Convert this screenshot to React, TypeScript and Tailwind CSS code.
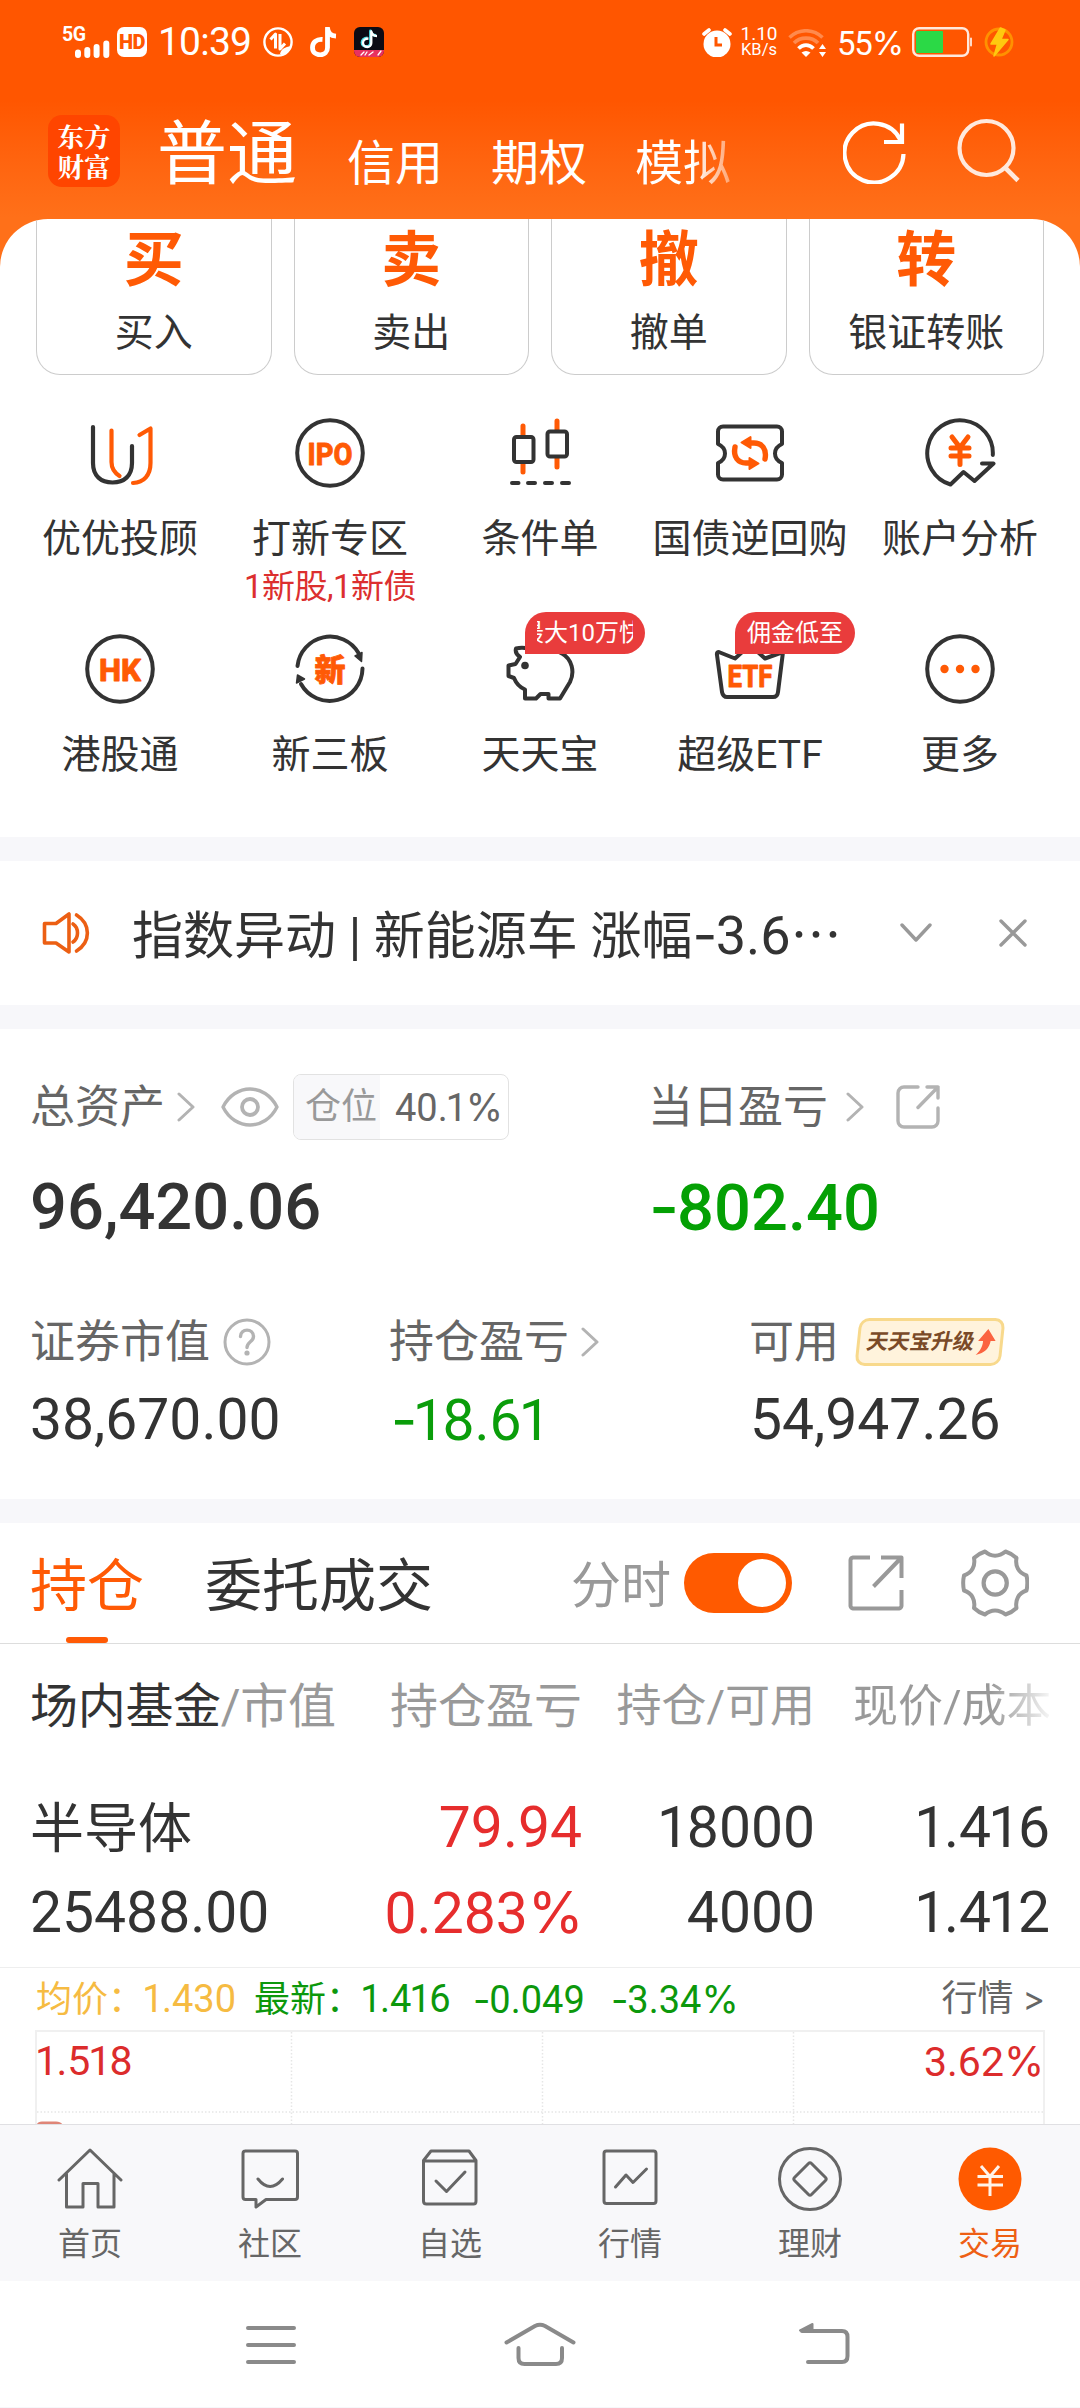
import type { ReactNode } from 'react';

const ORANGE = '#ff5a05';

const Svg = ({ w, h, children, className = '' }: { w: number; h: number; children: ReactNode; className?: string }) => (
  <svg width={w} height={h} viewBox={`0 0 ${w} ${h}`} fill="none" strokeLinecap="round" strokeLinejoin="round" className={`shrink-0 ${className}`}>
    {children}
  </svg>
);

// Roboto digits with a narrower 1 and Inter's wider hyphen and percent sign
const Num = ({ value }: { value: string }) => (
  <>
    {value.split(/([-1%])/).map((part, i) => {
      if (part === '1') return <span key={i} className="-mr-[0.04em] -ml-[0.05em]">1</span>;
      if (part === '-' || part === '%') return <span key={i} className="font-['Inter'] tracking-[-0.03em]">{part}</span>;
      return part;
    })}
  </>
);

const Chevron = ({ className = '' }: { className?: string }) => (
  <Svg w={18} h={30} className={className}><path d="M2 2L16 15L2 28" stroke="#b3b3b3" strokeWidth="3" /></Svg>
);

function StatusBar() {
  return (
    <div className="flex h-[84px] items-center pl-[62px] pr-[66px] text-white">
      <Svg w={48} h={32}>
        <text x="0" y="15" fontFamily="Roboto" fontWeight="700" fontSize="19.5" fill="#fff" textLength="24">5G</text>
        <path d="M16 26.5V29M25.3 24V29M34.6 21V29M44.3 17.5V29" stroke="#fff" strokeWidth="6" />
      </Svg>
      <div className="ml-[7px] flex h-[30px] w-[30px] items-center justify-center rounded-[7px] bg-white text-[20px] leading-none font-black tracking-[-0.5px] text-[#ff5600]">HD</div>
      <span className="ml-[11px] w-[93px] text-[39px] leading-none tracking-[-0.8px]">10:39</span>
      <Svg w={30} h={30} className="ml-[12px]">
        <circle cx="15" cy="15" r="13.6" stroke="#fff" strokeWidth="2.4" />
        <path d="M7.5 12.5L12.5 7V21.5M17 7V22L22 16.5" stroke="#fff" strokeWidth="3" strokeLinecap="butt" />
        <path d="M17 27C18 22 22 20 28 19C27 24 23 28 17 27Z" fill="#fff" />
      </Svg>
      <Svg w={27} h={30} className="ml-[17px]">
        <path d="M12.5 12.5C6.5 12 2.5 15.5 2.5 20.5S6 27.8 10.2 27.8S17.5 25 17.5 20.5V1C18 6 21 9 26 9.2" stroke="#fff" strokeWidth="4.8" strokeLinecap="butt" />
      </Svg>
      <Svg w={30} h={30} className="ml-[17px]">
        <rect width="30" height="30" rx="6" fill="#0c0b14" />
        <path d="M0 23H30V24A6 6 0 0 1 24 30H6A6 6 0 0 1 0 24Z" fill="#e8315f" />
        <path d="M13.5 11C10 11 8 13 8 15.5S10 19.5 12.5 19.5S16.5 18 16.5 15.5V4C17 7 19 8.5 22 8.5" stroke="#4be0e6" strokeWidth="2.8" strokeLinecap="butt" />
        <path d="M14.5 11.5C11 11.5 9 13.5 9 15.8S11 20 13.2 20S17.3 18.5 17.3 16V4.5C18 7.5 20 9 23 9" stroke="#fff" strokeWidth="2.3" strokeLinecap="butt" />
        <path d="M7 28L10 25M11 28L13 25M15 28L19 25M24 28L27 24" stroke="#fff" strokeWidth="1.3" />
      </Svg>

      <Svg w={30} h={30} className="ml-auto">
        <circle cx="15" cy="17" r="13.5" fill="#fff" />
        <path d="M2 7L7 3M28 7L23 3" stroke="#fff" strokeWidth="3.6" />
        <path d="M14 10V18H20" stroke="#ff5600" strokeWidth="3" strokeLinecap="butt" strokeLinejoin="miter" />
      </Svg>
      <div className="ml-[7px] flex w-[40px] flex-col items-center text-center leading-[16px]">
        <span className="text-[19px]">1.10</span>
        <span className="text-[16.5px]">KB/s</span>
      </div>
      <Svg w={38} h={28} className="mt-[2px] ml-[9px]">
        <path d="M1.5 8.5C11 -0.5 25 -0.5 34.5 8.5" stroke="#ff8a4d" strokeWidth="3.6" strokeLinecap="butt" />
        <path d="M6 14C12.5 7.5 23.5 7.5 30 14" stroke="#ff8a4d" strokeWidth="3.6" strokeLinecap="butt" />
        <path d="M10.5 19.5C15 15 21 15 25.5 19.5" stroke="#fff" strokeWidth="3.8" strokeLinecap="butt" />
        <path d="M13.5 23.5Q18 20.5 22.5 23.5L18 28Z" fill="#fff" />
        <path d="M34.5 15L38 20H31ZM34.5 28L38 23H31Z" fill="#fff" />
      </Svg>
      <span className="mt-[2px] ml-[11px] w-[64px] text-[33px] leading-none tracking-[-1.2px]"><Num value="55%" /></span>
      <Svg w={62} h={30} className="ml-[11px]">
        <rect x="1.2" y="1.2" width="55" height="27.6" rx="6" stroke="#ffe9dd" strokeWidth="2.4" />
        <rect x="4" y="4" width="27" height="22" rx="1" fill="#2bd946" />
        <path d="M59 11.5V18.5" stroke="#ffe9dd" strokeWidth="1.8" />
      </Svg>
      <Svg w={30} h={30} className="ml-[10px]">
        <circle cx="15" cy="15" r="13" stroke="#ff9100" strokeWidth="2.8" />
        <path d="M16.5 1L7 17H13.5L10 29L24 12.5H17L21 3Z" fill="#ffc90f" stroke="#ffc90f" strokeWidth="1.5" />
      </Svg>
    </div>
  );
}

function Header() {
  return (
    <div className="flex h-[135px] items-start pr-[59px] pl-12 text-white">
      <div className="mt-[31px] flex h-[72px] w-[72px] flex-col items-center justify-center rounded-[14px] bg-[#ff4500] font-['Noto_Serif_CJK_SC','Noto_Sans_CJK_SC',sans-serif] text-[26.5px] leading-[30px] font-bold">
        <span>东方</span>
        <span>财富</span>
      </div>
      <div className="mt-[28px] ml-[37px] flex items-baseline leading-[86px] whitespace-nowrap">
        <span className="text-[70px]">普通</span>
        <span className="relative top-px ml-[50px] text-[48px]">信用</span>
        <span className="relative top-px ml-[48px] text-[48px]">期权</span>
        <span className="relative top-px ml-[48px] bg-linear-to-r from-white from-60% to-white/40 bg-clip-text text-[48px] text-transparent">模拟</span>
      </div>
      <Svg w={64} h={64} className="mt-[36px] ml-auto">
        <path d="M60.5 34A29.5 29.5 0 1 1 57.5 20" stroke="#fff" strokeWidth="4.2" strokeLinecap="butt" />
        <path d="M59 3.5V22H41" stroke="#fff" strokeWidth="4.2" strokeLinecap="butt" strokeLinejoin="miter" />
      </Svg>
      <Svg w={64} h={66} className="mt-[34px] ml-[50px]">
        <circle cx="29.5" cy="30" r="27" stroke="#ffe9dd" strokeWidth="4.2" />
        <path d="M48.5 50L61 62.5" stroke="#ffe9dd" strokeWidth="4.6" strokeLinecap="butt" />
      </Svg>
    </div>
  );
}

const trades = [
  { mark: '买', label: '买入' },
  { mark: '卖', label: '卖出' },
  { mark: '撤', label: '撤单' },
  { mark: '转', label: '银证转账' },
];

const Ring = () => <circle cx="36" cy="36" r="32.8" stroke="#333" strokeWidth="4" />;

const IconText = ({ y = 47.5, w, size = 32, children }: { y?: number; w: number; size?: number; children: string }) => (
  <text x={36 - w / 2} y={y} textLength={w} lengthAdjust="spacingAndGlyphs" fontFamily="Roboto, 'Noto Sans CJK SC'" fontWeight="800" fontSize={size} fill={ORANGE} stroke={ORANGE} strokeWidth="0.8">{children}</text>
);

const features: { label: string; sub?: string; badge?: string; scrolled?: boolean; icon: ReactNode }[] = [
  {
    label: '优优投顾',
    icon: <>
      <path d="M27.5 13.5V45C27.5 52 31 56 35.5 59" stroke={ORANGE} strokeWidth="4.2" />
      <path d="M55.5 18L66.5 11.5V46C66.5 58 60 65.5 49 66" stroke={ORANGE} strokeWidth="4.2" />
      <path d="M9 10V46C9 59 17 65.5 28.5 65.5S48 59 48 46V29" stroke="#333" strokeWidth="4.2" />
    </>,
  },
  { label: '打新专区', sub: '1新股,1新债', icon: <><Ring /><IconText w={45}>IPO</IconText></> },
  {
    label: '条件单',
    icon: <>
      <path d="M19 9V18M19 46V55M53 4V13M53 41V50" stroke={ORANGE} strokeWidth="5" />
      <rect x="10" y="20" width="19.5" height="25" rx="2.5" stroke="#333" strokeWidth="4" />
      <rect x="43.5" y="14.5" width="19.5" height="25" rx="2.5" stroke="#333" strokeWidth="4" />
      <path d="M8 66H14.5M24 66H31M41 66H48M58 66H65" stroke="#333" strokeWidth="4" />
    </>,
  },
  {
    label: '国债逆回购',
    icon: <>
      <path d="M9 9.5H63A5 5 0 0 1 68 14.5V27Q61 30 61 36.5T68 46V57.5A5 5 0 0 1 63 62.5H9A5 5 0 0 1 4 57.5V46Q11 43 11 36.500T4 27V14.5A5 5 0 0 1 9 9.5Z" stroke="#333" strokeWidth="4" />
      {[0, 180].map(a => (
        <g key={a} transform={`rotate(${a} 36 36)`}>
          <path d="M35 26H40C48 26 53 32 51 42" stroke={ORANGE} strokeWidth="5.4" />
          <path d="M27.5 25.5L36.5 20V31Z" fill={ORANGE} stroke={ORANGE} strokeWidth="2" />
        </g>
      ))}
    </>,
  },
  {
    label: '账户分析',
    icon: <>
      <path d="M68.8 38A32.8 32.8 0 1 0 26.5 67.5L39.5 55L50.5 64L69.5 46.5H58" stroke="#333" strokeWidth="4" />
      <path d="M28 20L36 30.5L44 20M27 31H45M27 39H45M36 31V47.5" stroke={ORANGE} strokeWidth="5" />
    </>,
  },
  { label: '港股通', icon: <><Ring /><IconText w={42}>HK</IconText></> },
  {
    label: '新三板',
    icon: <>
      <path d="M3.5 33A32.8 32.8 0 0 1 64.5 20M68.5 35.500A32.8 32.8 0 0 1 7 51" stroke="#333" strokeWidth="4" />
      <path d="M61 23L68 19.5L67.5 28.5ZM2.5 50L3.5 42L10.5 46Z" fill="#333" stroke="#333" strokeWidth="1.5" />
      <IconText w={31} size={31}>新</IconText>
    </>,
  },
  {
    label: '天天宝',
    badge: '最大10万快',
    scrolled: true,
    icon: <>
      <path d="M24 15.5C20 14.5 16 14.5 12 15.5C11 19 13 22 16 24L11.5 31L4.5 32.5V43L10 45C12 50 15 54 21 56.5V65.5H32L36.500 61H44.5V65.5H56L66 49C71 39 68 26 58 20.5C48 14 34 14 24 15.5Z" stroke="#333" strokeWidth="4" />
      <circle cx="21" cy="32.5" r="3.8" fill="#333" />
    </>,
  },
  {
    label: '超级ETF',
    badge: '佣金低至',
    icon: <>
      <path d="M3 22C2.5 19.5 4 18.500 6 19.5L21 25.5L36 12L51 25.5L69 19L64 59Q63.5 64 59 64H13Q9 64 8 59Z" stroke="#333" strokeWidth="4" />
      <IconText w={45} y={53.5}>ETF</IconText>
    </>,
  },
  {
    label: '更多',
    icon: <>
      <Ring />
      <circle cx="20.5" cy="36" r="4.2" fill={ORANGE} />
      <circle cx="36" cy="36" r="4.2" fill={ORANGE} />
      <circle cx="51.5" cy="36" r="4.2" fill={ORANGE} />
    </>,
  },
];

function Shortcuts() {
  return (
    <section className="h-[618px] overflow-hidden rounded-t-[48px] bg-white">
      <div className="grid h-[156px] grid-cols-4 gap-[22px] px-9">
        {trades.map(t => (
          <div key={t.label} className="flex flex-col items-center rounded-b-[24px] border border-t-0 border-[#ccc]">
            <span className="mt-[12px] text-[60px] leading-[60px] font-bold text-[#ff5a05]">{t.mark}</span>
            <span className="mt-[22px] text-[39px] leading-[40px] text-[#333]">{t.label}</span>
          </div>
        ))}
      </div>
      <div className="grid grid-cols-5 px-[15px] pt-[42px]">
        {features.map(f => (
          <div key={f.label} className="relative flex h-[216px] flex-col items-center whitespace-nowrap">
            <Svg w={72} h={72}>{f.icon}</Svg>
            <span className="mt-[30px] text-[39px] leading-[40px] text-[#333]">{f.label}</span>
            {f.sub && <span className="mt-[8px] text-[33px] leading-[40px] tracking-[-0.5px] text-[#dc2f2f]">{f.sub}</span>}
            {f.badge && (
              <div className="absolute top-[-21px] left-[90px] h-[42px] w-[120px] rounded-[21px] rounded-bl-none bg-[#e93c3c] px-3 text-[24px] leading-[43px] text-white">
                <div className="overflow-hidden">
                  <div className={f.scrolled ? '-ml-[17px]' : ''}>{f.badge}</div>
                </div>
              </div>
            )}
          </div>
        ))}
      </div>
    </section>
  );
}

function Notice() {
  return (
    <section className="flex h-[144px] items-center bg-white pr-[53px] pl-[42px] text-[51px] text-[#333]">
      <Svg w={48} h={44}>
        <path d="M2.5 12.5H14L27 3V41L14 32H2.5Z" stroke="#ec5f13" strokeWidth="3.6" />
        <path d="M31 13C37 17 37 27 31 31M34.5 4C49 13 49 31 34.5 40" stroke="#ec5f13" strokeWidth="3.6" />
      </Svg>
      <div className="ml-[42px] flex-1 pt-[3px] leading-[60px] whitespace-pre">
        指数异动 | 新能源车 涨幅<span className="text-[54px]"><Num value="-3.6" /></span><span className="font-['Noto_Sans_CJK_SC']">…</span>
      </div>
      <Svg w={32} h={20} className="mr-[67px]"><path d="M2 2L16 17L30 2" stroke="#999" strokeWidth="3.4" /></Svg>
      <Svg w={28} h={28}><path d="M2 2L26 26M26 2L2 26" stroke="#999" strokeWidth="3.4" /></Svg>
    </section>
  );
}

function Assets() {
  return (
    <section className="h-[470px] bg-white px-[30px] pt-[45px] text-[45px] text-[#666]">
      <div className="flex h-[66px] items-center leading-[60px]">
        <div className="flex w-[618px] items-center">
          <span className="pt-[2px]">总资产</span>
          <Chevron className="ml-[12px]" />
          <Svg w={58} h={40} className="ml-[26px]">
            <path d="M2 20C14 -4 44 -4 56 20C44 44 14 44 2 20Z" stroke="#b3b3b3" strokeWidth="3.4" />
            <circle cx="29" cy="20" r="8" stroke="#b3b3b3" strokeWidth="3.8" />
          </Svg>
          <div className="ml-[14px] flex h-[66px] w-[216px] items-center overflow-hidden rounded-[8px] border border-[#e2e2e2] leading-[66px]">
            <span className="w-[86px] bg-[#f8f8fa] pl-[11px] text-[36px] text-[#999]">仓位</span>
            <span className="pl-[15px] text-[38px] whitespace-nowrap"><Num value="40.1%" /></span>
          </div>
        </div>
        <span className="pt-[2px]">当日盈亏</span>
        <Chevron className="ml-[18px]" />
        <Svg w={44} h={44} className="ml-[32px]">
          <path d="M22 2H8A6 6 0 0 0 2 8V36A6 6 0 0 0 8 42H36A6 6 0 0 0 42 36V23M31 2H42V13M42 2L22 22.5" stroke="#b3b3b3" strokeWidth="3.4" />
        </Svg>
      </div>
      <div className="mt-[32px] flex h-[70px] text-[65px] leading-[70px] font-medium">
        <span className="w-[619px] text-[#333]"><Num value="96,420.06" /></span>
        <span className="text-[#04a004]"><Num value="-802.40" /></span>
      </div>
      <div className="mt-[70px] flex h-[60px] items-center leading-[60px]">
        <div className="flex w-[359px] items-center">
          <span className="pt-[2px]">证券市值</span>
          <Svg w={48} h={48} className="ml-[13px]">
            <circle cx="24" cy="24" r="22" stroke="#b3b3b3" strokeWidth="3" />
            <path d="M17.5 18.5C17.5 10 30.500 10 30.5 18.5C30.5 24 24 23.5 24 29.5" stroke="#b3b3b3" strokeWidth="3.4" />
            <circle cx="24" cy="35" r="2.6" fill="#b3b3b3" />
          </Svg>
        </div>
        <div className="flex w-[360px] items-center">
          <span className="pt-[2px]">持仓盈亏</span>
          <Chevron className="ml-[12px]" />
        </div>
        <span className="pt-[2px]">可用</span>
        <div className="ml-[18px] flex h-[48px] w-[146px] -skew-x-6 items-center rounded-[10px] border-[3px] border-[#f8d98c] bg-[#fff3dc] pl-[7px] text-[21.5px] font-bold text-[#7a4a28]">
          <span className="-skew-x-6">天天宝升级</span>
          <Svg w={20} h={26} className="ml-px">
            <path d="M11 0L19.5 12H14.5C14 19 10 24 1 26C5 22 7 18 7 12H2Z" fill="#fb6340" />
          </Svg>
        </div>
      </div>
      <div className="mt-[13px] flex h-[70px] text-[57px] leading-[70px] text-[#333]">
        <span className="w-[361px]"><Num value="38,670.00" /></span>
        <span className="w-[359px] text-[#0a9d0a]"><Num value="-18.61" /></span>
        <span><Num value="54,947.26" /></span>
      </div>
    </section>
  );
}

function Tabs() {
  return (
    <div className="flex h-[121px] items-center border-b border-[#ddd] pr-[51px] pl-[30px] text-[57px] leading-[70px] text-[#333]">
      <div className="relative flex h-full items-center text-[#ff5a05]">
        <span className="pt-[7px]">持仓</span>
        <span className="absolute bottom-0 left-[36px] h-[6px] w-[42px] rounded-[3px] bg-[#ff5a05]" />
      </div>
      <span className="ml-[61px] pt-[7px]">委托成交</span>
      <span className="ml-auto pt-[5px] text-[50px] text-[#999]">分时</span>
      <div className="ml-[13px] flex h-[60px] w-[108px] items-center justify-end rounded-full bg-[#ff5a00] pr-[6px]">
        <div className="size-[48px] rounded-full bg-white" />
      </div>
      <Svg w={56} h={56} className="ml-[56px]">
        <path d="M22 2.5H5A3 3 0 0 0 2.5 5V51A3 3 0 0 0 5 53.5H51A3 3 0 0 0 53.5 51V35M33 2.5H53.5V23M53 3L25.5 31.5" stroke="#999" strokeWidth="4" strokeLinecap="butt" />
      </Svg>
      <Svg w={68} h={68} className="ml-[57px]">
        <path d="M24 2.5C30 8 38 8 44.5 2.5C49 4 52.5 6 55.5 9C54 17 57.5 24 65.5 26.5C66.5 31 66.5 37 65.5 41.5C57.5 44 54 51 55.5 59C52.5 62 49 64 44.5 65.5C38 60 30 60 24 65.5C19.5 64 16 62 13 59C14.5 51 11 44 3 41.5C2 37 2 31 3 26.5C11 24 14.5 17 13 9C16 6 19.5 4 24 2.5Z" stroke="#999" strokeWidth="4" />
        <circle cx="34.2" cy="34" r="11.6" stroke="#999" strokeWidth="4.2" />
      </Svg>
    </div>
  );
}

const rows = [
  ['半导体', '79.94', '18000', '1.416'],
  ['25488.00', '0.283%', '4000', '1.412'],
];

function Holdings() {
  return (
    <>
      <div className="grid h-[122px] grid-cols-[355px_197px_233px_234px] pl-[30px] text-[45px] leading-[126px] whitespace-nowrap text-[#999]">
        <span className="text-[48px] tracking-[-0.3px]"><span className="text-[#333]">场内基金</span>/市值</span>
        <span className="pl-[5px] text-[48px]">持仓盈亏</span>
        <span className="text-right">持仓/可用</span>
        <span className="bg-linear-to-r from-[#999] from-75% to-[#f4f4f4] bg-clip-text pl-[38px] text-transparent">现价/成本</span>
      </div>
      <div className="h-[202px] border-b border-[#eee] pt-[19px] text-[57px] leading-[85px] text-[#333]">
        {rows.map(([a, b, c, d]) => (
          <div key={a} className="grid h-[85px] grid-cols-[355px_197px_233px_235px] pl-[30px] text-right">
            <span className={/\d/.test(a) ? 'text-left' : 'pt-[2px] text-left text-[54px]'}>{a}</span>
            <span className="-ml-2 text-[#e62d2d]"><Num value={b} /></span>
            <span><Num value={c} /></span>
            <span><Num value={d} /></span>
          </div>
        ))}
      </div>
    </>
  );
}

function MiniChart() {
  return (
    <div className="h-[156px] overflow-hidden px-[35px]">
      <div className="flex h-[62px] items-center pl-px text-[38px] leading-[66px] whitespace-pre text-[#0c980c]">
        <span className="w-[218px] text-[#f6bb42]"><span className="text-[36px]">均价：</span><Num value="1.430" /></span>
        <span className="w-[219px]"><span className="text-[36px]">最新：</span><Num value="1.416" /></span>
        <span className="w-[138px]"><Num value="-0.049" /></span>
        <span><Num value="-3.34%" /></span>
        <span className="ml-auto text-[36px] text-[#666]">行情 <span className="font-['Inter'] text-[34px]">&gt;</span></span>
      </div>
      <div className="relative flex h-[94px] justify-between border-2 border-b-0 border-[#f0f0f0] text-[41px] leading-[58px] text-[#dc2c2c]">
        <svg className="absolute inset-0" width="1006" height="94" stroke="#e6e6e6" strokeWidth="1.5" strokeDasharray="1.5 2">
          <path d="M254.500 0V94M505.500 0V94M756.500 0V94M0 80H1006" />
          <path d="M0 94V92Q1 89.5 5 89.5H19Q25 89.5 26 94Z" fill="#df8577" stroke="none" />
        </svg>
        <span><Num value="1.518" /></span>
        <span><Num value="3.62%" /></span>
      </div>
    </div>
  );
}

const navItems: { label: string; active?: boolean; icon: ReactNode }[] = [
  { label: '首页', icon: <path d="M2 33L33 3L64 33M9.5 27V60H26V36.500H41V60H57V27" /> },
  { label: '社区', icon: <path d="M8 4H58Q60.5 4 60.5 6.5V50Q60.5 52.5 58 52.5H29L19 60V52.5H8.5Q6 52.5 6 50V6.5Q6 4 8.5 4ZM21 32Q33 47 45.5 32" /> },
  { label: '自选', icon: <path d="M6.5 13.5L14 4H52L59 13.5V54Q59 57 56.5 57H9.5Q6.5 57 6.5 54ZM6.5 14H59M19 34L29.5 44.5L48 25" /> },
  { label: '行情', icon: <path d="M9.5 4H56.5Q59 4 59 6.5V54Q59 56.5 56.5 56.5H9.5Q7 56.5 7 54V6.5Q7 4 9.5 4ZM18.5 40L29 28L36 35.5L49.5 22" /> },
  {
    label: '理财',
    icon: <>
      <circle cx="33" cy="32" r="30.5" />
      <path d="M31.5 16.5Q33 15 34.5 16.5L48.5 30.5Q50 32 48.5 33.5L34.5 47.5Q33 49 31.5 47.5L17.5 33.5Q16 32 17.5 30.5Z" />
    </>,
  },
  {
    label: '交易',
    active: true,
    icon: <>
      <circle cx="33" cy="32" r="31.5" fill="#ff5a00" stroke="none" />
      <path d="M24 19L33 29.5L42 19M20.5 29.5H46M20.5 38H46M33 29.5V49" stroke="#fff3ea" strokeLinecap="butt" />
    </>,
  },
];

function BottomNav() {
  return (
    <nav className="grid h-[157px] grid-cols-6 border-t border-[#e0e0e3] bg-[#f8f8fa] pt-[22px]">
      {navItems.map(n => (
        <div key={n.label} className="flex flex-col items-center">
          <Svg w={66} h={64}><g stroke="#666" strokeWidth="3">{n.icon}</g></Svg>
          <span className={`mt-[13px] text-[32px] leading-[40px] ${n.active ? 'text-[#ee5f14]' : 'text-[#666]'}`}>{n.label}</span>
        </div>
      ))}
    </nav>
  );
}

function SystemNav() {
  return (
    <div className="flex h-[126px] justify-between bg-white pt-[41px] pr-[230px] pl-[245px]">
      <Svg w={52} h={46}><path d="M3 6H49M3 23H49M3 40H49" stroke="#8a8a8a" strokeWidth="4" /></Svg>
      <Svg w={72} h={46} className="ml-[-16px]">
        <path d="M2.5 20.5L31 4Q36 1.5 41 4L69.5 20.5M14.5 26V36Q14.5 42 20.5 42H52Q58 42 58 36V26" stroke="#8a8a8a" strokeWidth="4" />
      </Svg>
      <Svg w={52} h={46}>
        <path d="M10 40H44Q49.5 40 49.5 34V15Q49.5 9 44 9H4" stroke="#8a8a8a" strokeWidth="4" />
        <path d="M2 8.5L14.5 2V8.5Z" fill="#8a8a8a" stroke="#8a8a8a" strokeWidth="2" />
      </Svg>
    </div>
  );
}

export default function App() {
  return (
    <main className="flex h-[2408px] w-[1080px] flex-col overflow-hidden bg-[#f7f7fa] font-['Roboto','Noto_Sans_CJK_SC',sans-serif]">
      <div className="bg-linear-to-b from-[#ff5600] from-12% to-[#ff7019] to-26%">
        <StatusBar />
        <Header />
        <Shortcuts />
      </div>
      <div className="mt-6"><Notice /></div>
      <div className="mt-6"><Assets /></div>
      <section className="mt-6 bg-white">
        <Tabs />
        <Holdings />
        <MiniChart />
      </section>
      <BottomNav />
      <SystemNav />
    </main>
  );
}
